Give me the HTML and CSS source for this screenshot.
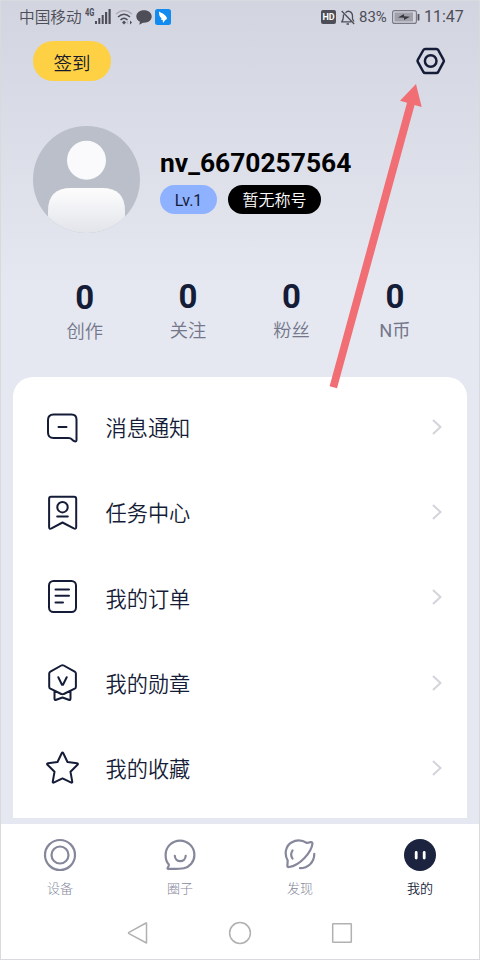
FILE: index.html
```html
<!DOCTYPE html>
<html lang="zh-CN">
<head>
<meta charset="utf-8">
<title>我的</title>
<link rel="stylesheet" href="styles.css">
</head>
<body>
<div class="phone">
  <header class="status">
    <span class="carrier">中国移动</span>
    <span class="network">4G</span>
    <svg class="signal" width="16" height="15" viewBox="0 0 16 15" fill="#4d4e57"><rect x="0" y="12" width="2" height="3"/><rect x="3.3" y="9" width="2" height="6"/><rect x="6.7" y="6" width="2" height="9"/><rect x="10" y="3" width="2.2" height="12"/><rect x="13.5" y="0" width="2.2" height="15"/></svg>
    <svg class="wifi" width="18" height="16" viewBox="0 0 18 16" fill="none" stroke="#4d4e57" stroke-width="1.5"><path d="M1 5Q9-2 17 5" stroke="#a9aab5"/><path d="M3 8Q9 2.500 15 8M5.500 11Q9 7.500 12.500 11"/><path d="M9 11.500l2 2-2 2-2-2z" fill="#4d4e57" stroke="none"/><path d="M13.200 12l-1.200 1.500 1.200 1.500" stroke="#a9aab5" stroke-width="1"/><path d="M15 11.500l2 2-2 2z" fill="#4d4e57" stroke="none"/></svg>
    <svg class="chat" width="16" height="15" viewBox="0 0 16 15" fill="#4d4e57"><path d="M8 .3c4.500 0 7.700 2.700 7.700 6.200S12.500 12.700 8 12.700l-1 0L3.300 14.700l.6-3C1.600 10.600.3 8.700.3 6.500.3 3 3.500.3 8 .3z"/></svg>
    <svg class="app" width="16" height="16" viewBox="0 0 16 16"><rect width="16" height="16" rx="2.500" fill="#128bf0"/><path d="M4 2.500c2 1.300 4.500 2 6.500 4.200q1.500 1.500 1.500 3.200L10.300 11 8 14l-.3-3-1.700-.3.500-1.400C4.500 7.800 4 6 4 2.500z" fill="#fff"/></svg>
    <span class="space"></span>
    <span class="hd">HD</span>
    <svg class="bell" width="14" height="15" viewBox="0 0 14 15" fill="none" stroke="#4d4e57" stroke-width="1.300"><path d="M.7 1l12.500 13M2.600 4.500C2 7 3 9 .8 11.800h9.500M4.500 2.800C7-.2 11.500 1.600 11.500 6v3l1.500 2.500M5.500 14h2.500"/></svg>
    <span class="percent">83%</span>
    <svg class="battery" width="28" height="14" viewBox="0 0 28 14"><rect x=".6" y=".6" width="23.800" height="12.800" rx="2" fill="none" stroke="#777881" stroke-width="1.100"/><rect x="2.500" y="2.500" width="18.500" height="9" fill="#9fa0aa"/><path d="M6 7.500l6-3.500v2.200l6 .5-6 3.400V7.800z" fill="#36373f"/><path d="M26.500 4v6.500" stroke="#4d4e57" stroke-width="1.800"/></svg>
    <span class="clock">11:47</span>
  </header>
  <div class="toolbar">
    <button class="checkin">签到</button>
    <svg width="32" height="32" viewBox="0 0 32 32" fill="none" stroke="#151c38" stroke-width="2.500" stroke-linejoin="round"><path d="M10.200 4h11.200q1.200 0 1.800 1l5.400 9.800q.6 1 0 2l-5.400 10.200q-.6 1-1.800 1H10.200q-1.200 0-1.800-1L2.800 16.800q-.6-1 0-2L8.400 5q.6-1 1.800-1z"/><circle cx="15.700" cy="16" r="5.800"/></svg>
  </div>
  <section class="profile">
    <svg class="avatar" width="107" height="107" viewBox="0 0 107 107"><defs><linearGradient id="torso" x2="0" y2="1"><stop stop-color="#fdfdfd"/><stop offset="1" stop-color="#e2e4ea"/></linearGradient><clipPath id="disc"><circle cx="53.500" cy="53.500" r="53.500"/></clipPath></defs><g clip-path="url(#disc)"><rect width="107" height="107" fill="#bbbfc9"/><circle cx="53.500" cy="34.300" r="19.500" fill="#fafafc"/><path d="M15 107V85q0-23 23-23h31q23 0 23 23v22z" fill="url(#torso)"/></g></svg>
    <div class="identity">
      <h1>nv_6670257564</h1>
      <div class="badges"><span class="level">Lv.1</span><span class="honor">暂无称号</span></div>
    </div>
  </section>
  <section class="stats">
    <div class="stat first"><b>0</b><span>创作</span></div>
    <div class="stat"><b>0</b><span>关注</span></div>
    <div class="stat"><b>0</b><span>粉丝</span></div>
    <div class="stat"><b>0</b><span>N币</span></div>
  </section>
  <main class="menu">
    <div class="row"><svg class="icon" viewBox="0 0 36 36"><path d="M9.500 5.500h18q5 0 5 5V31q0 1.800-1.800 1.300C28 31.300 28 29 24.500 29H9.500q-5.500 0-5.500-5.500V11q0-5.500 5.500-5.500zM14.500 18h8"/></svg><span>消息通知</span><svg class="arrow" viewBox="0 0 12 18"><path d="M2 2l7.500 7L2 16"/></svg></div>
    <div class="row"><svg class="icon" viewBox="0 0 36 36"><path d="M7 2.700h23q2.200 0 2.200 2.200v28q0 2.500-2.400 1.400L18.500 28.500 7.500 34.400q-2.400 1.100-2.400-1.400V4.900q0-2.200 1.900-2.200zM13.200 22.500h10.600"/><circle cx="18.500" cy="13.200" r="5.200"/></svg><span>任务中心</span><svg class="arrow" viewBox="0 0 12 18"><path d="M2 2l7.500 7L2 16"/></svg></div>
    <div class="row"><svg class="icon" viewBox="0 0 36 36"><rect x="5" y="2" width="27" height="31" rx="4.500"/><path d="M11.500 10.500H25M11.500 16.800H25M11.500 23.500H19"/></svg><span>我的订单</span><svg class="arrow" viewBox="0 0 12 18"><path d="M2 2l7.500 7L2 16"/></svg></div>
    <div class="row"><svg class="icon" viewBox="0 0 36 36"><path d="M17.300.5q1.200-.7 2.400 0l11 6.200q1.200.7 1.200 2v13q0 1.300-1.200 2l-11 5.300q-1.200.7-2.400 0l-10.900-5.300q-1.200-.7-1.200-2v-13q0-1.300 1.200-2zM14.300 12.200l3.700 7.500h1l3.700-7.500M10.500 26.500v7q0 2 1.800 1.300l6.200-2.300 6.200 2.300q1.800.7 1.800-1.300v-7"/></svg><span>我的勋章</span><svg class="arrow" viewBox="0 0 12 18"><path d="M2 2l7.500 7L2 16"/></svg></div>
    <div class="row"><svg class="icon" viewBox="0 0 36 36"><path d="M17.700 3.200q.8-1.600 1.600 0l4.200 8.800 9.500 1.300q1.600.3.500 1.500l-7 7 1.700 9.600q.3 1.800-1.400 1l-8.300-4-8.300 4q-1.700.8-1.400-1l1.700-9.600-7-7q-1.100-1.200.5-1.500l9.500-1.300z"/></svg><span>我的收藏</span><svg class="arrow" viewBox="0 0 12 18"><path d="M2 2l7.500 7L2 16"/></svg></div>
  </main>
  <footer>
    <nav class="tabs">
      <div class="tab"><svg viewBox="0 0 34 34"><circle cx="17" cy="17" r="15"/><circle cx="17" cy="17" r="8.500"/></svg><span>设备</span></div>
      <div class="tab"><svg viewBox="0 0 34 34"><path d="M4.800 29.500Q6.200 28 5.800 26.500C3.500 24.200 2.600 20.500 2.600 17A14.400 14.400 0 0 1 31.400 17C31.400 24 26.500 29 21 30.200Q17 31 5.500 30.900q-1.600 0-.7-1.400zM11.800 17.800c.4 7.200 10.500 7.200 10.900 0"/></svg><span>圈子</span></div>
      <div class="tab"><svg viewBox="0 0 34 34"><path d="M4.700 22.500C1 16 2.500 8 8.500 4.500 13.500 1.600 19 2 24 5l3.700-.8q2-.3 1.700 1.700C28.500 14 17 27.500 6 29q-1.900.3-1.600-1.500zM9.500 12.500Q6.800 16.500 9.500 20.500M31.300 15.800C31.300 24.500 25 30 17 30.200"/></svg><span>发现</span></div>
      <div class="tab active"><svg viewBox="0 0 34 34"><circle class="face" cx="17" cy="17" r="16"/><path class="eyes" d="M13.200 14.500v5.500M21.200 14.500v5.500"/></svg><span>我的</span></div>
    </nav>
    <div class="system">
      <svg viewBox="0 0 24 24"><path d="M20.500 2v20L3 12.600q-1-.6 0-1.200L20 2z"/></svg>
      <svg viewBox="0 0 24 24"><circle cx="12" cy="12" r="10.400"/></svg>
      <svg viewBox="0 0 24 24"><rect x="2.700" y="2.700" width="18.600" height="18.600" rx=".5"/></svg>
    </div>
  </footer>
  <svg class="pointer" width="480" height="960" viewBox="0 0 480 960"><path d="M416 84l5.700 23-7.100-2L337 388.300l-7.400-2L407 102.800l-7-2.100z" fill="#f06e74"/></svg>
</div>
</body>
</html>
```
FILE: styles.css
```css
* { box-sizing: border-box; }
body { margin: 0; font-family: Roboto, "Noto Sans CJK SC", sans-serif; color: #151c38; }
.phone { position: relative; width: 480px; height: 960px; overflow: hidden; display: flex; flex-direction: column; background: linear-gradient(#d2d4e0, #e5e8f0 290px); border: 1px solid #d9dade; }
.status { height: 32px; padding: 0 15px 0 18px; display: flex; align-items: center; flex: none; color: #4d4e57; font-size: 16px; line-height: 20px; }
.status svg { flex: none; }
.carrier { width: 65px; padding-top: 1px; font-size: 15.700px; font-weight: 350; white-space: nowrap; }
.network { width: 10px; margin: -9px 0 0 1px; font: 700 10px/10px Roboto, sans-serif; transform: scaleX(.75); transform-origin: left; }
.signal { margin-top: -2px; }
.wifi { margin-left: 4px; margin-top: -1px; }
.chat { margin-left: 3px; }
.app { margin-left: 3px; }
.space { flex: 1; }
.hd { width: 15px; height: 14px; border-radius: 2px; background: #4d4e57; color: #fff; font-size: 9px; font-weight: 700; line-height: 14px; text-align: center; }
.bell { margin-left: 5px; }
.percent { margin-left: 4px; width: 29px; font-size: 15px; }
.battery { margin-left: 4px; }
.clock { margin-left: 4px; width: 40px; font-size: 16px; }
.toolbar { display: flex; justify-content: space-between; align-items: center; height: 40px; margin: 8px 32px 0; flex: none; }
.checkin { width: 78px; height: 40px; padding: 1px 0 0; border: 0; border-radius: 20px; background: #fed144; color: #17182a; font: 350 18.500px "Noto Sans CJK SC", sans-serif; }
.profile { display: flex; height: 107px; margin: 45px 32px 0; flex: none; }
.identity { margin: 22px 0 0 20px; }
h1 { margin: 0; font-size: 26.400px; line-height: 30px; font-weight: 700; color: #000; white-space: nowrap; }
.badges { display: flex; gap: 11px; margin-top: 7px; }
.badges span { height: 29px; border-radius: 15px; text-align: center; font-size: 16px; line-height: 32px; }
.badges .level { width: 57px; background: #8eb2ff; }
.badges .honor { width: 93px; background: #000; color: #fff; font-weight: 350; }
.stats { display: flex; margin: 47px 32px 0; height: 97px; flex: none; }
.stat { width: 103.400px; display: flex; flex-direction: column; align-items: center; }
.stat.first { padding-top: 1px; }
.stat b { font-size: 33px; line-height: 34px; }
.stat span { margin-top: 4px; font-size: 18.300px; line-height: 26px; font-weight: 350; color: #74778b; }
.stat:last-child span { font-weight: 400; }
.menu { height: 441px; margin: 0 12px; padding-top: 7px; border-radius: 20px 20px 0 0; background: #fff; flex: none; }
.row { display: flex; align-items: center; height: 85.300px; padding: 0 24px 0 31px; }
.icon { width: 36px; height: 36px; fill: none; stroke: #151c38; stroke-width: 2; stroke-linecap: round; stroke-linejoin: round; overflow: visible; }
.row span { flex: 1; margin-left: 25.500px; padding-top: 5px; font-size: 21.200px; line-height: 30px; font-weight: 350; }
.arrow { width: 12px; height: 18px; fill: none; stroke: #d3d4dc; stroke-width: 2; }
footer { flex: 1; margin-top: 6px; background: #fff; }
.tabs { display: flex; padding: 14px 0 0; margin: 0 -1px; }
.tab { flex: 1; display: flex; flex-direction: column; align-items: center; color: #85879a; font-size: 13px; line-height: 18px; font-weight: 300; }
.tab svg { width: 34px; height: 34px; fill: none; stroke: #85879a; stroke-width: 2.200; stroke-linecap: round; stroke-linejoin: round; }
.tab span { margin-top: 8px; }
.active { color: #151c38; font-weight: 350; }
.tab .face { fill: #1c233e; stroke: none; }
.tab .eyes { stroke: #fff; stroke-width: 2.800; }
.system { display: flex; justify-content: center; gap: 78px; margin-top: 23px; }
.system svg { width: 24px; height: 24px; fill: none; stroke: #b1b1b3; stroke-width: 1.500; stroke-linejoin: round; }
.pointer { position: absolute; left: -1px; top: -1px; pointer-events: none; }
```
